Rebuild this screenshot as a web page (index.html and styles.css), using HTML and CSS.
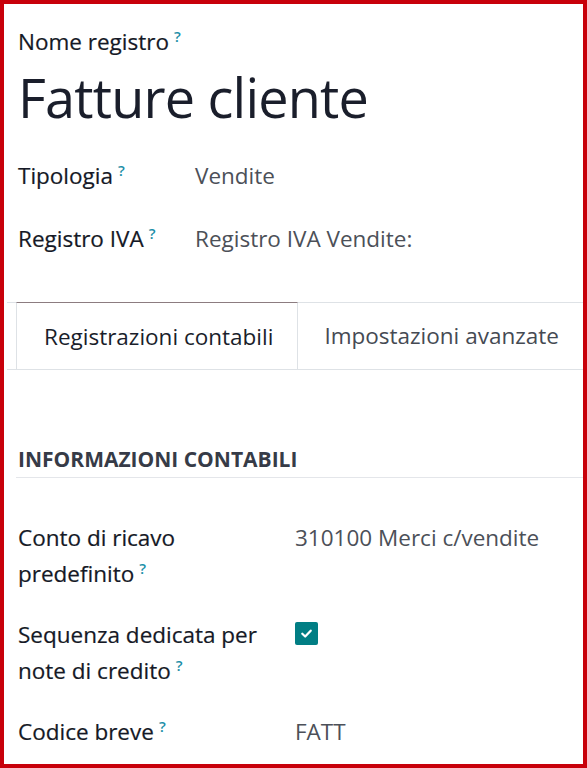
FILE: index.html
```html
<!DOCTYPE html>
<html lang="it">
<head>
<meta charset="utf-8">
<title>Fatture cliente</title>
<link rel="stylesheet" href="styles.css">
</head>
<body>
<div class="frame">
  <div class="sheet">
    <div class="name-label">Nome registro<sup class="q">?</sup></div>
    <h1 class="title">Fatture cliente</h1>
    <div class="top-fields">
      <div class="label">Tipologia<sup class="q">?</sup></div>
      <div class="value">Vendite</div>
      <div class="label">Registro IVA<sup class="q">?</sup></div>
      <div class="value">Registro IVA Vendite:</div>
    </div>
  </div>
  <div class="tabs">
    <div class="tab active">Registrazioni contabili</div>
    <div class="tab">Impostazioni avanzate</div>
  </div>
  <div class="sheet">
    <div class="section-title">INFORMAZIONI CONTABILI</div>
    <div class="fields">
      <div class="label">Conto di ricavo predefinito<sup class="q">?</sup></div>
      <div class="value">310100 Merci c/vendite</div>
      <div class="label">Sequenza dedicata per note di credito<sup class="q">?</sup></div>
      <div class="value"><span class="check"><svg viewBox="0 0 16 16" width="15" height="15"><path d="M3.5 8.3 L6.6 11.2 L12.5 5" fill="none" stroke="#fff" stroke-width="2.4" stroke-linecap="round" stroke-linejoin="round"/></svg></span></div>
      <div class="label">Codice breve<sup class="q">?</sup></div>
      <div class="value">FATT</div>
    </div>
  </div>
</div>
</body>
</html>
```
FILE: styles.css
```css
html, body {
  margin: 0;
  padding: 0;
  background: #ffffff;
}
.frame {
  box-sizing: border-box;
  width: 587px;
  height: 768px;
  border: 4px solid #c8000a;
  overflow: hidden;
  background: #ffffff;
  font-family: "Open Sans", "Noto Sans", sans-serif;
  color: #1a1e2b;
  padding-left: 3px;
}
.sheet {
  padding-left: 11px;
}
.q {
  color: #1d8fa8;
  font-size: 15px;
  line-height: 0;
  font-weight: 600;
  margin-left: 5px;
  vertical-align: baseline;
  position: relative;
  top: -8px;
  -webkit-text-stroke: 0;
}
.name-label {
  font-size: 22.5px;
  line-height: 30px;
  margin-top: 23px;
  color: #151926;
  -webkit-text-stroke: 0.2px #151926;
}
.title {
  font-weight: 400;
  font-size: 54px;
  line-height: 64px;
  margin: 8px 0 0 0;
  letter-spacing: -0.8px;
}
.top-fields {
  display: grid;
  grid-template-columns: 177px 1fr;
  row-gap: 33px;
  margin-top: 32px;
  font-size: 22.5px;
  line-height: 30px;
}
.label {
  font-weight: 500;
  color: #151926;
  -webkit-text-stroke: 0.2px #151926;
}
.value {
  color: #4c5058;
}
.tabs {
  display: flex;
  margin-top: 48px;
  border-top: 1px solid #dee2e6;
  border-bottom: 1px solid #dee2e6;
}
.tab {
  flex-shrink: 0;
  white-space: nowrap;
  height: 65px;
  display: flex;
  align-items: center;
  font-size: 22.5px;
  color: #454a53;
  padding: 0 27px 0 26px;
}
.tab.active {
  margin-left: 9px;
  margin-top: -1px;
  height: 66px;
  border-top: 1px solid #8c7c80;
  border-left: 1px solid #dee2e6;
  border-right: 1px solid #dee2e6;
  color: #1a1e2b;
  padding: 0 24px 0 27px;
}
.section-title {
  margin-top: 75px;
  font-weight: 700;
  font-size: 21px;
  line-height: 28px;
  color: #363b47;
  padding-bottom: 4px;
  border-bottom: 1px solid #e4e6ea;
  margin-left: -2px;
  padding-left: 2px;
}
.fields {
  display: grid;
  grid-template-columns: 277px 1fr;
  row-gap: 25px;
  margin-top: 42px;
  font-size: 22.5px;
  line-height: 36px;
}
.fields .label {
  padding-right: 22px;
}
.fields .value {
  display: flex;
  align-items: flex-start;
}
.check {
  display: flex;
  align-items: center;
  justify-content: center;
  width: 23px;
  height: 23px;
  background: #017e84;
  border-radius: 2px;
  margin-top: 5px;
}
```
